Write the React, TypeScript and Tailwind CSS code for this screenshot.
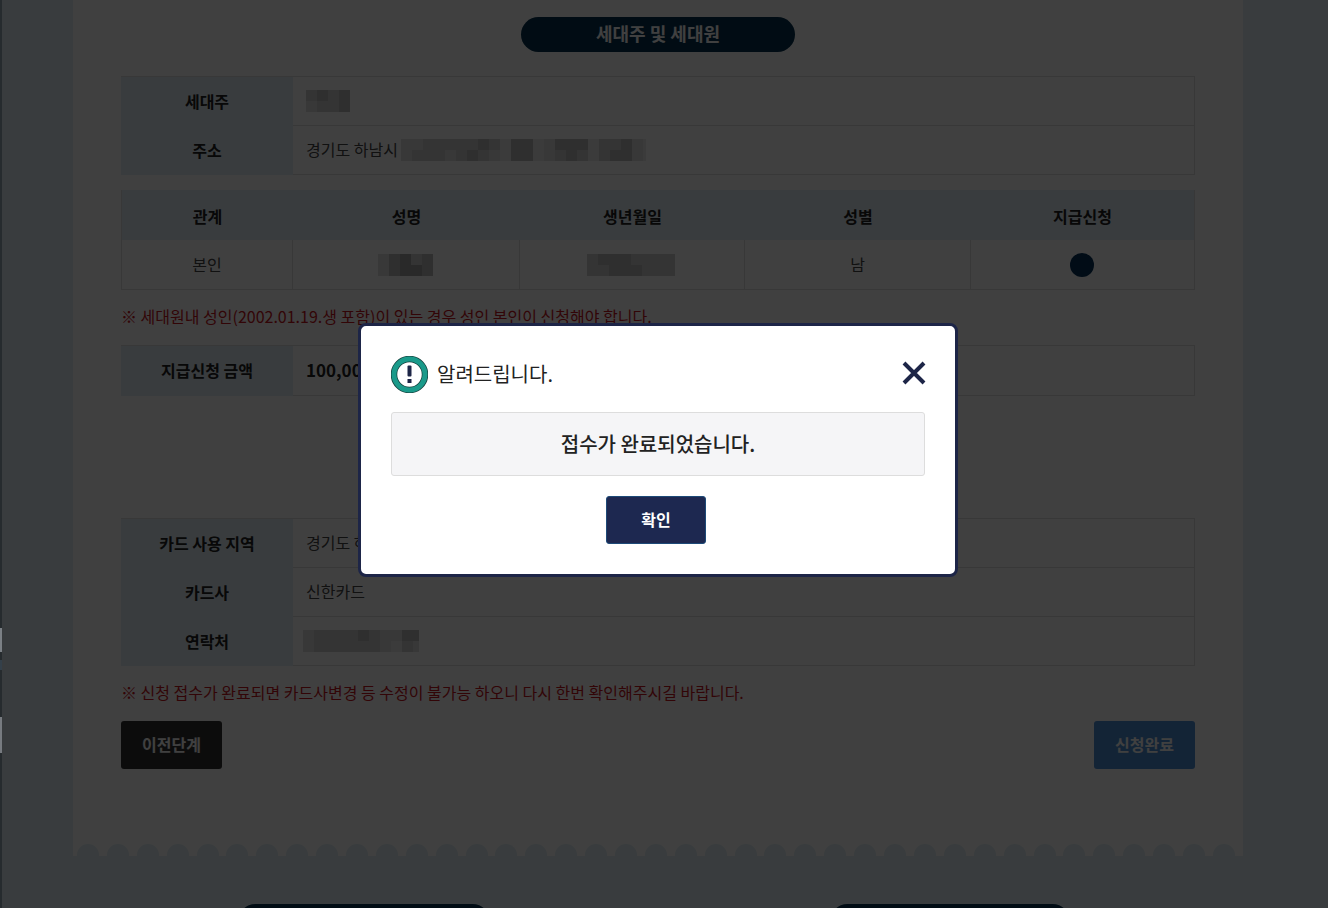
import React from 'react';

const font = { fontFamily: '"Noto Sans CJK KR", "Noto Sans", sans-serif' };

// pixelated stand-in for the masked personal data
const Mosaic: React.FC<{ cells: string[][] }> = ({ cells }) => (
  <div className="flex flex-col overflow-hidden">
    {cells.map((row, i) => (
      <div key={i} className="flex">
        {row.map((c, j) => (
          <div key={j} className={`h-[11px] w-[11px] shrink-0 ${c}`}></div>
        ))}
      </div>
    ))}
  </div>
);

const d = 'bg-[#ebebeb]';
const a = 'bg-[#dedede]';
const b = 'bg-[#cfcfcf]';
const c = 'bg-[#bcbcbc]';
const e = 'bg-[#a2a2a2]';

const Th: React.FC<{ children: React.ReactNode; className?: string }> = ({ children, className }) => (
  <div className={`flex items-center justify-center bg-[#e2eef6] text-[16px] font-bold text-[#222] ${className ?? 'pb-[2px]'}`}>
    {children}
  </div>
);

const Row: React.FC<{ label: string; children: React.ReactNode }> = ({ label, children }) => (
  <div className="flex h-[49px]">
    <Th className="w-[172px] shrink-0 pb-[2px]">{label}</Th>
    <div className="flex flex-1 items-center border-b border-[#ddd] pl-[13px] text-[16px] text-[#444]">
      {children}
    </div>
  </div>
);

const Note: React.FC<{ children: React.ReactNode }> = ({ children }) => (
  <p className="text-[16px] leading-[22px] text-[#c8161d]">{children}</p>
);

const Scallops: React.FC = () => (
  <div className="flex h-[12px] gap-[7.9px] overflow-hidden pl-[4px]">
    {Array.from({ length: 39 }).map((_, i) => (
      <div key={i} className="h-[24px] w-[22px] shrink-0 rounded-full bg-[#e2f0f6]"></div>
    ))}
  </div>
);

export default function App() {
  return (
    <div className="relative h-[908px] overflow-hidden bg-[#e2f0f6]" style={font}>
      <div className="ml-[73px] w-[1170px] bg-white">
        <div className="h-[844px] px-12 pt-[17px]">
          <div className="mx-auto flex h-[35px] w-[274px] items-center justify-center rounded-full bg-[#04314f] pb-[2px] text-[18px] font-bold text-white">
            세대주 및 세대원
          </div>

          <div className="mt-[24px] border-t border-r border-[#ddd]">
            <Row label="세대주">
              <Mosaic
                cells={[
                  [b, c, b, c],
                  [a, b, b, c],
                ]}
              />
            </Row>
            <Row label="주소">
              <span className="pb-[2px]">경기도 하남시</span>
              <div className="ml-[3px] w-[245px]">
                <Mosaic
                  cells={[
                    [a, a, b, b, b, b, b, c, b, d, c, c, d, a, c, c, c, d, b, b, c, a, d],
                    [a, b, b, b, a, b, c, b, a, d, c, c, d, a, b, c, b, d, b, c, c, a, d],
                  ]}
                />
              </div>
            </Row>
          </div>

          <div className="mt-[15px] border-r border-b border-l border-[#ddd]">
            <div className="grid h-[50px] grid-cols-[171px_227px_225px_226px_1fr]">
              <Th className="pt-[1px]">관계</Th>
              <Th className="pt-[1px]">성명</Th>
              <Th className="pt-[1px]">생년월일</Th>
              <Th className="pt-[1px]">성별</Th>
              <Th className="pt-[1px]">지급신청</Th>
            </div>
            <div className="grid h-[49px] grid-cols-[171px_227px_225px_226px_1fr] text-[16px] text-[#444]">
              <div className="flex items-center justify-center border-r border-[#ddd] pb-[2px]">본인</div>
              <div className="flex items-center justify-center border-r border-[#ddd] pr-[1px]">
                <Mosaic
                  cells={[
                    [a, c, e, b, c],
                    [a, c, e, e, c],
                  ]}
                />
              </div>
              <div className="flex items-center justify-center border-r border-[#ddd] pr-[2px]">
                <Mosaic
                  cells={[
                    [b, c, c, c, b, b, b, b],
                    [b, b, c, c, c, b, b, b],
                  ]}
                />
              </div>
              <div className="flex items-center justify-center border-r border-[#ddd] pb-[2px]">남</div>
              <div className="flex items-center justify-center pr-[2px]">
                <div className="h-6 w-6 rounded-full bg-[#04315a]"></div>
              </div>
            </div>
          </div>

          <div className="mt-[15px]">
            <Note>※ 세대원내 성인(2002.01.19.생 포함)이 있는 경우 성인 본인이 신청해야 합니다.</Note>
          </div>

          <div className="mt-[18px] border-t border-r border-[#ddd]">
            <div className="flex h-[50px]">
              <Th className="w-[172px] shrink-0 pb-[2px]">지급신청 금액</Th>
              <div className="flex flex-1 items-center border-b border-[#ddd] pb-[2px] pl-[13px] text-[17px] font-bold text-[#222]">
                100,000원
              </div>
            </div>
          </div>

          <div className="mt-[122px] border-t border-r border-[#ddd]">
            <Row label="카드 사용 지역">
              <span className="pb-[2px]">경기도 하남시</span>
            </Row>
            <Row label="카드사">
              <span className="pb-[2px]">신한카드</span>
            </Row>
            <Row label="연락처">
              <div className="-ml-[3px] w-[116px]">
                <Mosaic
                  cells={[
                    [a, b, b, b, b, c, b, a, a, c, c],
                    [a, b, b, b, b, b, b, a, d, b, a],
                  ]}
                />
              </div>
            </Row>
          </div>

          <div className="mt-[15px]">
            <Note>※ 신청 접수가 완료되면 카드사변경 등 수정이 불가능 하오니 다시 한번 확인해주시길 바랍니다.</Note>
          </div>

          <div className="mt-[18px] flex justify-between">
            <button className="h-12 w-[101px] rounded-[3px] bg-[#333] pb-[2px] text-[16px] font-bold text-white">이전단계</button>
            <button className="h-12 w-[101px] rounded-[3px] bg-[#4c8fd6] pb-[2px] text-[16px] font-bold text-white">신청완료</button>
          </div>
        </div>

        {/* scalloped bottom edge of the white sheet */}
        <Scallops />
      </div>

      <div className="mt-[48px] ml-[238px] flex gap-[340px]">
        <div className="h-[35px] w-[252px] rounded-full bg-[#04314f]"></div>
        <div className="h-[35px] w-[240px] rounded-full bg-[#04314f]"></div>
      </div>

      {/* dimmed backdrop */}
      <div className="absolute inset-0 bg-black/75"></div>

      {/* sliver of the window behind, at the very left edge */}
      <div className="absolute top-0 left-0 flex h-full w-[2px] flex-col bg-[#262b2e]">
        <div className="mt-[628px] h-[24px] bg-[#7b8085]"></div>
        <div className="mt-[8px] h-[10px] bg-[#34404a]"></div>
        <div className="mt-[47px] h-[36px] bg-[#777b80]"></div>
      </div>

      <div className="absolute top-[323px] left-[358px] w-[600px] rounded-[8px] border-[3px] border-[#1d2547] bg-white px-[30px] pt-[30px] pb-[30px]">
        <div className="flex items-center">
          <svg width="37" height="37" viewBox="0 0 37 37">
            <circle cx="18.5" cy="18.5" r="15.5" fill="#fff" stroke="#17423f" strokeWidth="6.5" />
            <circle cx="18.5" cy="18.5" r="15.5" fill="none" stroke="#1a9a8a" strokeWidth="5" />
            <rect x="16.5" y="9.5" width="4" height="11" rx="1" fill="#1d2547" />
            <rect x="16.5" y="23" width="4" height="4" fill="#1d2547" />
          </svg>
          <span className="ml-[9px] flex-1 pb-[2px] text-[20px] text-[#222]">알려드립니다.</span>
          <svg width="24" height="24" viewBox="0 0 24 24" className="mr-[-1px] -mt-1">
            <path d="M2 2 L22 22 M22 2 L2 22" stroke="#1d2547" strokeWidth="4" fill="none" />
          </svg>
        </div>
        <div className="mt-[19px] flex h-16 items-center justify-center rounded-[3px] border border-[#ddd] bg-[#f5f5f7] text-[20px] font-medium text-[#222]">
          접수가 완료되었습니다.
        </div>
        <div className="mt-5 flex justify-center">
          <button className="-ml-[4px] h-12 w-[100px] rounded-[3px] border border-[#1d4a78] bg-[#1d2850] pb-[2px] text-[16px] font-bold text-white">
            확인
          </button>
        </div>
      </div>
    </div>
  );
}
